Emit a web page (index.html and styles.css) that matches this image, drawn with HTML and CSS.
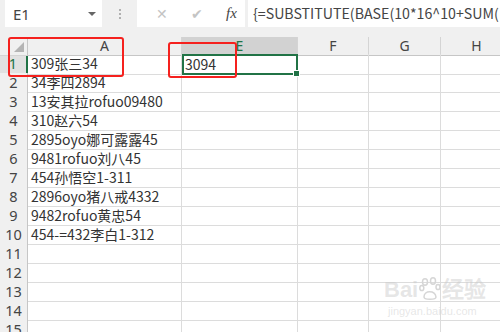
FILE: index.html
```html
<!DOCTYPE html>
<html lang="zh-CN">
<head>
    <meta charset="UTF-8">
    <title>Excel - E1</title>
    <link rel="stylesheet" href="styles.css">
</head>
<body>
    <div class="toolbar">
        <div class="namebox">
            <span>E1</span>
            <span class="caret"></span>
        </div>
        <div class="grip"><i></i><i></i><i></i></div>
        <div class="buttons">
            <span class="btn">&#x2715;</span>
            <span class="btn">&#x2714;</span>
            <span class="fx">fx</span>
        </div>
        <div class="formula">{=SUBSTITUTE(BASE(10*16^10+SUM(</div>
    </div>

    <div class="sheet">
        <div class="row head">
            <div class="corner"><span class="tri"></span></div>
            <div class="ch">A</div>
            <div class="ch sel">E</div>
            <div class="ch">F</div>
            <div class="ch">G</div>
            <div class="ch">H</div>
        </div>
        <div class="row">
            <div class="rh sel">1</div>
            <div class="c">309张三34</div>
            <div class="c active">3094<span class="handle"></span></div>
            <div class="c"></div><div class="c"></div><div class="c"></div>
        </div>
        <div class="row">
            <div class="rh">2</div><div class="c">34李四2894</div>
            <div class="c"></div><div class="c"></div><div class="c"></div><div class="c"></div>
        </div>
        <div class="row">
            <div class="rh">3</div><div class="c">13安其拉rofuo09480</div>
            <div class="c"></div><div class="c"></div><div class="c"></div><div class="c"></div>
        </div>
        <div class="row">
            <div class="rh">4</div><div class="c">310赵六54</div>
            <div class="c"></div><div class="c"></div><div class="c"></div><div class="c"></div>
        </div>
        <div class="row">
            <div class="rh">5</div><div class="c">2895oyo娜可露露45</div>
            <div class="c"></div><div class="c"></div><div class="c"></div><div class="c"></div>
        </div>
        <div class="row">
            <div class="rh">6</div><div class="c">9481rofuo刘八45</div>
            <div class="c"></div><div class="c"></div><div class="c"></div><div class="c"></div>
        </div>
        <div class="row">
            <div class="rh">7</div><div class="c">454孙悟空1-311</div>
            <div class="c"></div><div class="c"></div><div class="c"></div><div class="c"></div>
        </div>
        <div class="row">
            <div class="rh">8</div><div class="c">2896oyo猪八戒4332</div>
            <div class="c"></div><div class="c"></div><div class="c"></div><div class="c"></div>
        </div>
        <div class="row">
            <div class="rh">9</div><div class="c">9482rofuo黄忠54</div>
            <div class="c"></div><div class="c"></div><div class="c"></div><div class="c"></div>
        </div>
        <div class="row">
            <div class="rh">10</div><div class="c">454-=432李白1-312</div>
            <div class="c"></div><div class="c"></div><div class="c"></div><div class="c"></div>
        </div>
        <div class="row">
            <div class="rh">11</div><div class="c"></div>
            <div class="c"></div><div class="c"></div><div class="c"></div><div class="c"></div>
        </div>
        <div class="row">
            <div class="rh">12</div><div class="c"></div>
            <div class="c"></div><div class="c"></div><div class="c"></div><div class="c"></div>
        </div>
        <div class="row">
            <div class="rh">13</div><div class="c"></div>
            <div class="c"></div><div class="c"></div><div class="c"></div><div class="c"></div>
        </div>
        <div class="row">
            <div class="rh">14</div><div class="c"></div>
            <div class="c"></div><div class="c"></div><div class="c"></div><div class="c"></div>
        </div>
        <div class="row">
            <div class="rh">15</div><div class="c"></div>
            <div class="c"></div><div class="c"></div><div class="c"></div><div class="c"></div>
        </div>
    </div>

    <!-- marcas rojas sobre la hoja -->
    <div class="mark mark-a"></div>
    <div class="mark mark-e"></div>

    <div class="watermark">
        <div class="wm-logo">
            <span>Bai</span>
            <svg class="paw" width="22" height="24" viewBox="0 0 22 24">
                <g fill="none" stroke="#d6d6d6" stroke-width="1.5">
                    <ellipse cx="6" cy="5" rx="2.5" ry="3.2"/>
                    <ellipse cx="14" cy="4" rx="2.5" ry="3.2"/>
                    <ellipse cx="2.8" cy="11" rx="2" ry="2.6"/>
                    <ellipse cx="19" cy="10" rx="2" ry="2.6"/>
                    <path d="M5 20 C5 13 16 13 17 20 C17 23 5 23 5 20 Z"/>
                </g>
            </svg>
            <span>经验</span>
        </div>
        <div class="wm-url">jingyan.baidu.com</div>
    </div>
</body>
</html>
```

FILE: styles.css
```css
body {
    margin: 0;
    width: 500px;
    height: 332px;
    overflow: hidden;
    background: #ffffff;
    font-family: "Noto Sans CJK SC", "Noto Sans", sans-serif;
    color: #333;
    position: relative;
}

/* Barra de nombre y fórmula */
.toolbar {
    height: 37px;
    background: #f0f0f0;
    display: flex;
    align-items: flex-start;
    box-sizing: border-box;
}
.namebox {
    margin-left: 5px;
    width: 97px;
    height: 27px;
    background: #fff;
    display: flex;
    align-items: center;
    justify-content: space-between;
    padding: 0 6px 0 8px;
    box-sizing: border-box;
    font-family: "Noto Sans", sans-serif;
    font-size: 15px;
    color: #444;
}
.caret {
    width: 0;
    height: 0;
    border-left: 4px solid transparent;
    border-right: 4px solid transparent;
    border-top: 4px solid #666;
}
.grip {
    width: 35px;
    height: 27px;
    display: flex;
    flex-direction: column;
    align-items: center;
    justify-content: center;
    gap: 2px;
}
.grip i {
    width: 2px;
    height: 2px;
    background: #b0b0b0;
}
.buttons {
    width: 108px;
    height: 27px;
    background: #fff;
    display: flex;
    align-items: center;
    padding-left: 19px;
    box-sizing: border-box;
}
.btn {
    color: #c4c4c4;
    font-size: 14px;
    width: 35px;
    font-family: "DejaVu Sans", sans-serif;
}
.fx {
    font-family: "Liberation Serif", serif;
    font-style: italic;
    font-size: 15px;
    color: #444;
}
.formula {
    margin-left: 3px;
    flex: 1;
    height: 27px;
    background: #fff;
    padding-left: 5px;
    font-size: 14.2px;
    line-height: 27px;
    color: #444;
    white-space: nowrap;
    overflow: hidden;
}

/* Hoja de cálculo */
.sheet {
    width: 520px;
}
.row {
    display: grid;
    grid-template-columns: 28px 154px 116px 71px 72px 72px;
    height: 19px;
}
.row.head {
    height: 17px;
}
.corner, .ch, .rh {
    background: #f0f0f0;
    box-sizing: border-box;
    border-right: 1px solid #d4d4d4;
    border-bottom: 1px solid #d4d4d4;
    color: #444;
    font-family: "Noto Sans", sans-serif;
}
.corner {
    position: relative;
    border-right-color: #c6c6c6;
}
.tri {
    position: absolute;
    right: 3px;
    bottom: 3px;
    width: 0;
    height: 0;
    border-left: 10px solid transparent;
    border-bottom: 10px solid #b4b4b4;
}
.ch {
    text-align: center;
    font-size: 14px;
    line-height: 17px;
    border-bottom-color: #c6c6c6;
}
.ch.sel {
    background: #d2d2d2;
    color: #217346;
    border-bottom: 2px solid #217346;
}
.rh {
    text-align: center;
    font-size: 14.5px;
    line-height: 19px;
    border-right-color: #c6c6c6;
}
.rh.sel {
    color: #217346;
    border-right: 2px solid #217346;
    background: #e1e1e1;
}
.c {
    box-sizing: border-box;
    border-right: 1px solid #dcdcdc;
    border-bottom: 1px solid #dcdcdc;
    font-size: 14px;
    line-height: 19px;
    padding-left: 3px;
    white-space: nowrap;
    overflow: visible;
}
.c.active {
    position: relative;
    border: 2px solid #217346;
    line-height: 17px;
    padding-left: 1px;
}
.handle {
    position: absolute;
    right: -4px;
    bottom: -4px;
    width: 5px;
    height: 5px;
    background: #217346;
    border: 1px solid #fff;
}

/* Marcas rojas */
.mark {
    position: absolute;
    border: 2.5px solid #f5211e;
    border-radius: 3px;
    box-sizing: border-box;
}
.mark-a {
    left: 8px;
    top: 37px;
    width: 116px;
    height: 40px;
}
.mark-e {
    left: 168px;
    top: 42px;
    width: 69px;
    height: 36px;
}

/* Marca de agua */
.watermark {
    position: absolute;
    left: 384px;
    top: 276px;
    color: rgba(200, 200, 200, 0.45);
    font-family: "Liberation Sans", sans-serif;
}
.wm-logo {
    display: flex;
    align-items: flex-end;
    font-size: 22px;
    font-weight: bold;
    line-height: 28px;
}
.paw {
    margin: 0 1px 3px;
}
.wm-url {
    font-size: 11px;
    line-height: 14px;
    margin-left: 4px;
}
```
